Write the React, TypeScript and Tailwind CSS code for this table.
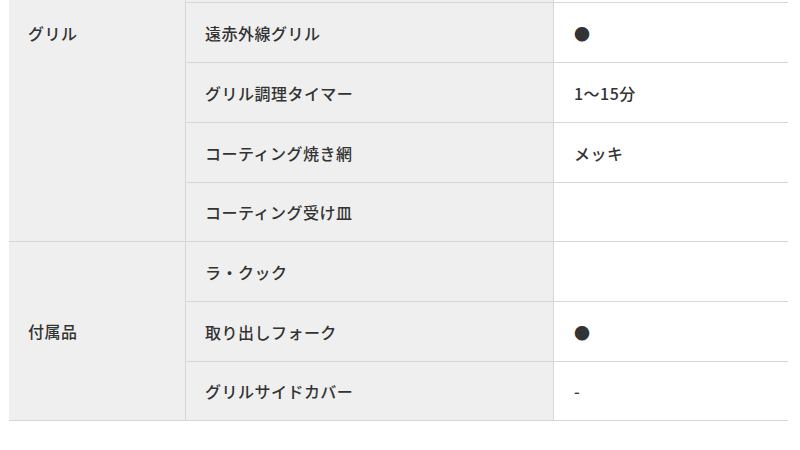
const groups = [
  {
    label: 'グリル',
    top: true,
    rows: [
      { name: '遠赤外線グリル', value: '●' },
      { name: 'グリル調理タイマー', value: '1〜15分' },
      { name: 'コーティング焼き網', value: 'メッキ' },
      { name: 'コーティング受け皿', value: '' },
    ],
  },
  {
    label: '付属品',
    top: false,
    rows: [
      { name: 'ラ・クック', value: '' },
      { name: '取り出しフォーク', value: '●' },
      { name: 'グリルサイドカバー', value: '-' },
    ],
  },
]

export default function App() {
  return (
    <div
      className="w-[800px] h-[450px] bg-white overflow-hidden text-[16px] text-[#333333] font-medium tracking-[0.03em]"
      style={{ fontFamily: '"Noto Sans CJK JP", "Noto Sans", sans-serif' }}
    >
      <div className="ml-[9px] w-[779px] flex flex-col">
        {/* sliver of the row above */}
        <div className="flex h-[3px]">
          <div className="w-[177px] bg-[#efefef] border-r border-[#d6d6d6]" />
          <div className="w-[368px] bg-[#efefef] border-r border-b border-[#d6d6d6]" />
          <div className="flex-1 bg-white border-b border-[#d6d6d6]" />
        </div>
        {groups.map((g) => (
          <div key={g.label} className="flex border-b border-[#d6d6d6]">
            <div
              className={
                g.top
                  ? 'w-[177px] shrink-0 bg-[#efefef] border-r border-[#d6d6d6] pl-[19px] pt-[18px]'
                  : 'w-[177px] shrink-0 bg-[#efefef] border-r border-[#d6d6d6] pl-[19px] flex items-center'
              }
            >
              <span className="leading-6">{g.label}</span>
            </div>
            <div className="flex-1 flex flex-col">
              {g.rows.map((r, i) => (
                <div
                  key={r.name}
                  className={
                    i === g.rows.length - 1
                      ? 'flex h-[58px]'
                      : 'flex h-[60px] border-b border-[#d6d6d6]'
                  }
                >
                  <div className="w-[368px] shrink-0 bg-[#efefef] border-r border-[#d6d6d6] pl-[19px] flex items-center">
                    {r.name}
                  </div>
                  <div className="flex-1 bg-white pl-[20px] flex items-center">
                    {r.value}
                  </div>
                </div>
              ))}
            </div>
          </div>
        ))}
      </div>
    </div>
  )
}
